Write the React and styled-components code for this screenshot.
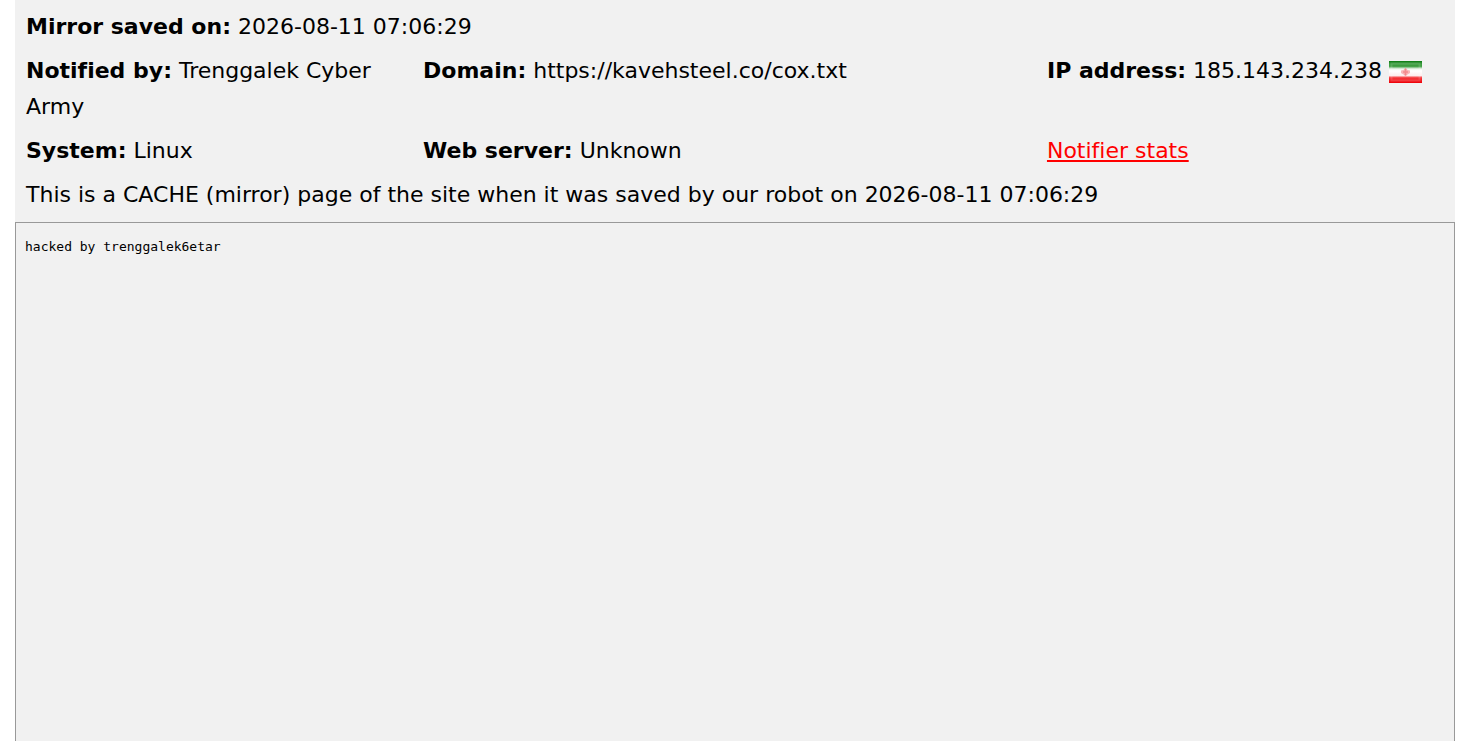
import React from "react";
import styled, { createGlobalStyle } from "styled-components";

const mirror = {
  savedOn: "2026-08-11 07:06:29",
  notifier: "Trenggalek Cyber Army",
  domain: "https://kavehsteel.co/cox.txt",
  ip: "185.143.234.238",
  system: "Linux",
  webServer: "Unknown",
  content: "hacked by trenggalek6etar",
};

const Field = ({ label, children }) => (
  <Cell>
    <strong>{label}:</strong> {children}
  </Cell>
);

const IranFlag = () => (
  <Flag viewBox="0 0 33 22" role="img" aria-label="Iran">
    <defs>
      <linearGradient id="flag-stripes" x1="0" y1="0" x2="0" y2="1">
        <stop offset="0" stopColor="#0a7a10" />
        <stop offset="0.14" stopColor="#3f9f42" />
        <stop offset="0.24" stopColor="#3a9c3d" />
        <stop offset="0.36" stopColor="#eef6ee" />
        <stop offset="0.45" stopColor="#ffffff" />
        <stop offset="0.66" stopColor="#fdeeee" />
        <stop offset="0.76" stopColor="#f5393c" />
        <stop offset="1" stopColor="#ee0008" />
      </linearGradient>
    </defs>
    <rect width="33" height="22" fill="url(#flag-stripes)" />
    <rect x="2.5" y="2.5" width="28" height="17" fill="none" stroke="#fff" strokeOpacity="0.14" strokeWidth="2" />
    <path d="M16.5 7L18.5 9L21 9.5V12L18.5 13.5L16.5 15L14.5 13.5L12 12V9.5L14.5 9Z" fill="#f4888a" fillOpacity="0.6" />
    <path d="M16.5 7.5V14.5M14 11H19" fill="none" stroke="#ef5f63" strokeOpacity="0.5" strokeWidth="1.6" />
  </Flag>
);

export default function App() {
  return (
    <>
      <GlobalStyle />
      <Page>
        <Info>
          <Row>
            <Field label="Mirror saved on">{mirror.savedOn}</Field>
          </Row>
          <Row $columns>
            <Field label="Notified by">{mirror.notifier}</Field>
            <Field label="Domain">{mirror.domain}</Field>
            <Field label="IP address">
              {mirror.ip} <IranFlag />
            </Field>
          </Row>
          <Row $columns>
            <Field label="System">{mirror.system}</Field>
            <Field label="Web server">{mirror.webServer}</Field>
            <Cell>
              <StatsLink href="#stats">Notifier stats</StatsLink>
            </Cell>
          </Row>
          <Row>
            <Cell>
              This is a CACHE (mirror) page of the site when it was saved by our robot on {mirror.savedOn}
            </Cell>
          </Row>
        </Info>
        <Frame>
          <Source>{mirror.content}</Source>
        </Frame>
      </Page>
    </>
  );
}

const GlobalStyle = createGlobalStyle`
  * {
    box-sizing: border-box;
  }

  body {
    margin: 0;
    background: #fff;
    color: #000;
    font-family: Verdana, "DejaVu Sans", sans-serif;
    font-size: 22px;
    font-variant-ligatures: none;
    line-height: 36px;
  }
`;

const Page = styled.main`
  display: flex;
  flex-direction: column;
  min-height: 100vh;
  margin: 0 5px 0 15px;
  background: #f1f1f1;
`;

const Info = styled.header`
  display: flex;
  flex-direction: column;
  gap: 8px;
  padding: 9px 11px;
`;

const Row = styled.div`
  display: grid;
  grid-template-columns: ${({ $columns }) => ($columns ? "28fr 44fr 28fr" : "1fr")};
`;

const Cell = styled.div`
  min-width: 0;
`;

const Flag = styled.svg`
  width: 33px;
  height: 22px;
  vertical-align: middle;
`;

const StatsLink = styled.a`
  color: #f00;
  text-decoration: underline;
`;

const Frame = styled.section`
  flex: 1;
  border: 1px solid #999;
  border-bottom: 0;
  padding: 16px 9px;
`;

const Source = styled.pre`
  margin: 0;
  font-family: Consolas, "DejaVu Sans Mono", monospace;
  font-size: 13px;
  line-height: 16px;
  white-space: pre-wrap;
`;
